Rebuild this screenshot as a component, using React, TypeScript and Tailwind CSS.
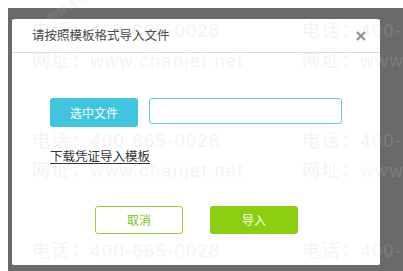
import React from 'react';

const wm = 'rgba(200,200,200,0.22)';

function Watermarks() {
  const rows = [
    { y: 20, text: '电话：400-665-0028' },
    { y: 50, text: '网址：www.chanjet.net' },
    { y: 130, text: '电话：400-665-0028' },
    { y: 160, text: '网址：www.chanjet.net' },
    { y: 240, text: '电话：400-665-0028' },
  ];
  return (
    <div className="pointer-events-none absolute inset-0 z-20 overflow-hidden">
      {rows.map((r, i) => (
        <React.Fragment key={i}>
          <span
            className="absolute whitespace-nowrap text-[18px] leading-[22px] tracking-[1.5px] [font-family:'Liberation_Sans','Noto_Sans_CJK_SC',sans-serif]"
            style={{ left: 32, top: r.y, color: wm }}
          >
            {r.text}
          </span>
          <span
            className="absolute whitespace-nowrap text-[18px] leading-[22px] tracking-[1.5px] [font-family:'Liberation_Sans','Noto_Sans_CJK_SC',sans-serif]"
            style={{ left: 302, top: r.y, color: wm }}
          >
            {r.text}
          </span>
        </React.Fragment>
      ))}
      <span
        className="absolute -rotate-[30deg] whitespace-nowrap text-[11px] [font-family:'Noto_Sans_CJK_SC',sans-serif]"
        style={{ left: 44, top: -4, color: wm }}
      >
        畅捷通社区
      </span>
    </div>
  );
}

export default function App() {
  return (
    <div className="relative h-[271px] w-[403px] overflow-hidden bg-white [font-family:'Noto_Sans_CJK_SC','Liberation_Sans',sans-serif]">
      <div className="ml-[8px] mt-[8px] h-[263px] w-[395px] bg-[#6a6a6a] pl-[4px] pt-[11px]">
        <div className="flex h-[246px] w-[368px] flex-col rounded-[2px] bg-white">
          <div className="flex h-[34px] items-center justify-between border-b border-[#dedede] pl-[20px] pr-[14px]">
            <span className="text-[12.5px] text-[#444]">请按照模板格式导入文件</span>
            <svg width="10" height="10" viewBox="0 0 10 10" className="text-[#8a8a8a]">
              <path d="M1 1L9 9M9 1L1 9" stroke="currentColor" strokeWidth="2" />
            </svg>
          </div>
          <div className="flex flex-col pl-[38px] pt-[45px]">
            <div className="flex items-start gap-[11px]">
              <button className="h-[29px] w-[88px] rounded-[3px] bg-[#3fc5df] text-[12px] text-white">
                选中文件
              </button>
              <div className="h-[26px] w-[193px] rounded-[3px] border border-[#62cbe0] bg-white" />
            </div>
            <a className="mt-[21px] w-fit text-[12.5px] leading-[16px] text-[#333] underline underline-offset-[2px]">
              下载凭证导入模板
            </a>
          </div>
          <div className="mt-auto mb-[31px] flex justify-center gap-[27px] pl-[1px]">
            <button className="h-[28px] w-[88px] rounded-[3px] border border-[#96d43c] bg-white text-[12px] text-[#7cc21e]">
              取消
            </button>
            <button className="h-[28px] w-[88px] rounded-[3px] bg-[#8bcf0f] text-[12px] text-white">
              导入
            </button>
          </div>
        </div>
      </div>
      <Watermarks />
    </div>
  );
}
